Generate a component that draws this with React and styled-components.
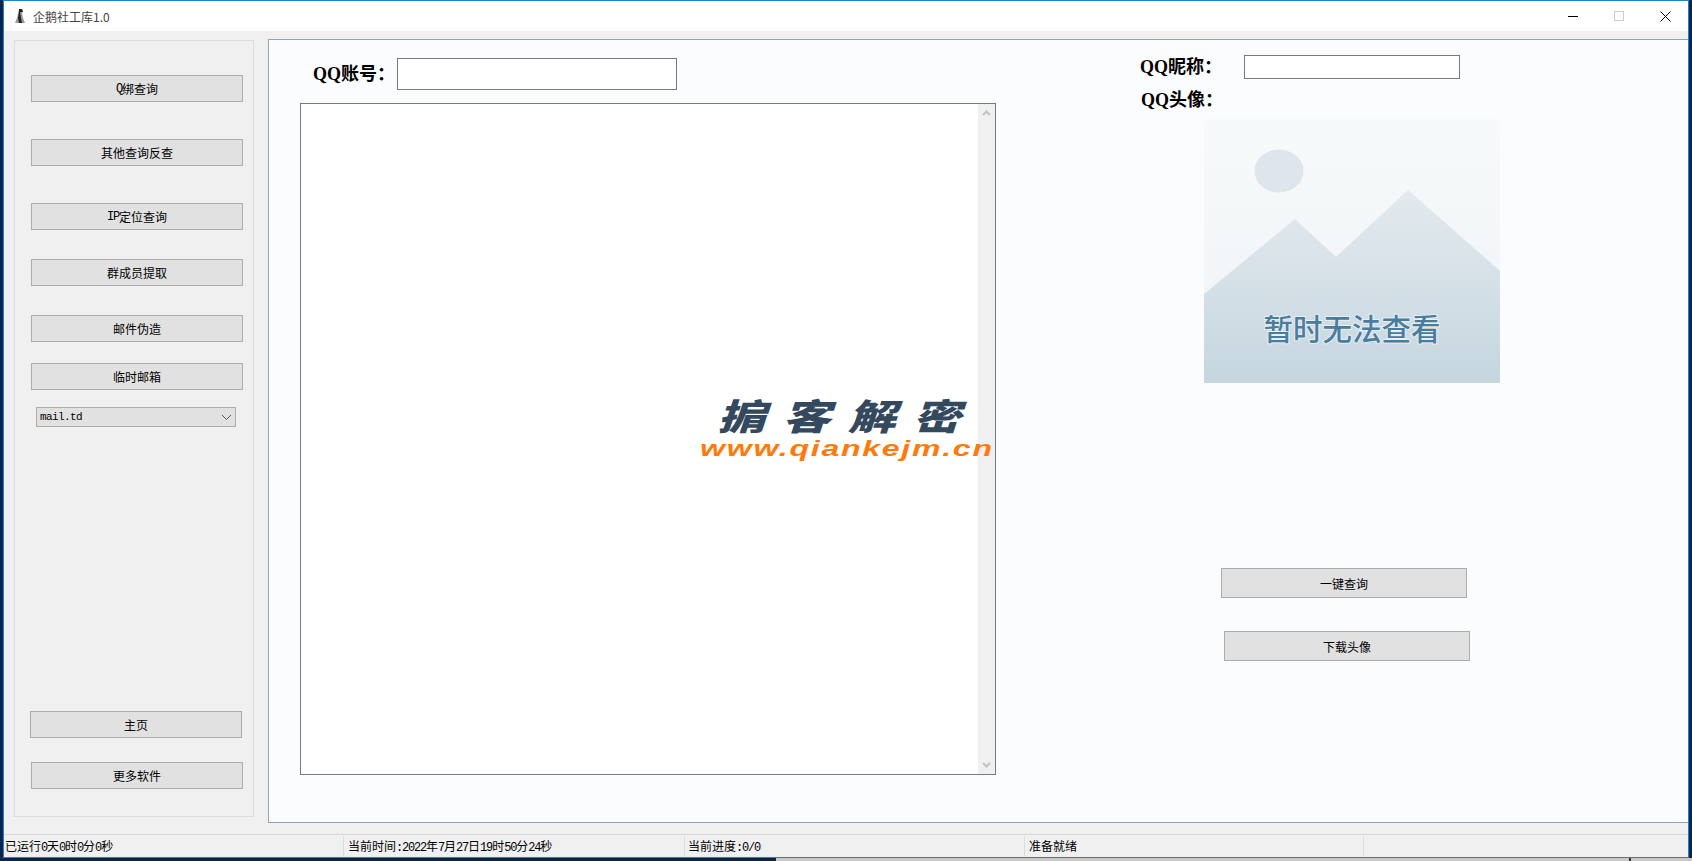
import styled, { createGlobalStyle } from 'styled-components';

const GlobalStyle = createGlobalStyle`
    html, body {
        margin: 0;
        padding: 0;
        height: 100%;
        overflow: hidden;
    }
    body {
        background: #03264a;
        font-family: "Noto Sans CJK SC", "Liberation Sans", sans-serif;
    }
`;

const SONG = `"Liberation Mono", "Noto Sans CJK SC", monospace`;
const LABEL = `"Liberation Serif", "Noto Sans CJK SC", serif`;

const Desktop = styled.div`
    width: 1692px;
    height: 861px;
    display: flex;
    align-items: flex-start;
    padding-left: 3px;
    box-sizing: border-box;
    background:
        linear-gradient(90deg, #03264a 0 776px, #c8c8c8 776px 1629px, #333 1629px 1631px, #c8c8c8 1631px) bottom / 100% 3px no-repeat,
        #03264a;
`;

const Window = styled.div`
    width: 1686px;
    height: 858px;
    box-sizing: border-box;
    border: 1px solid #1883d7;
    background: #f0f0f0;
    display: flex;
    flex-direction: column;
`;

const TitleBar = styled.div`
    height: 30px;
    flex: none;
    background: #fff;
    display: flex;
    align-items: center;
    padding-left: 10px;
`;

const TitleText = styled.span`
    margin-left: 7px;
    font-size: 12px;
    color: #444;
`;

const WinControls = styled.div`
    margin-left: auto;
    display: flex;
    height: 100%;
`;

const WinButton = styled.div`
    width: 46px;
    height: 100%;
    display: flex;
    align-items: center;
    justify-content: center;
`;

const Body = styled.div`
    flex: 1;
    min-height: 0;
    display: flex;
    align-items: flex-start;
    padding: 8px 0 0 10px;
`;

const Sidebar = styled.div`
    width: 240px;
    height: 777px;
    box-sizing: border-box;
    margin-top: 1px;
    border: 1px solid #dcdcdc;
    padding: 34px 0 27px 16px;
    display: flex;
    flex-direction: column;
    flex: none;
`;

const SideButton = styled.div`
    width: 212px;
    height: 27px;
    flex: none;
    box-sizing: border-box;
    margin-top: ${({ $top }) => $top || 0}px;
    margin-left: ${({ $shift }) => $shift || 0}px;
    background: #e1e1e1;
    border: 1px solid #adadad;
    display: flex;
    align-items: center;
    justify-content: center;
    font-family: ${SONG};
    font-size: 12px;
    color: #000;
`;

const Latin = styled.span`
    letter-spacing: -1.2px;
`;

const Select = styled.div`
    width: 200px;
    height: 20px;
    flex: none;
    box-sizing: border-box;
    margin: 17px 0 0 5px;
    padding: 0 3px;
    background: #e1e1e1;
    border: 1px solid #adadad;
    display: flex;
    align-items: center;
    justify-content: space-between;
    font-family: ${SONG};
    font-size: 11px;
    letter-spacing: -0.6px;
    color: #000;
`;

const BottomGroup = styled.div`
    margin-top: auto;
    display: flex;
    flex-direction: column;
`;

const MainPanel = styled.div`
    margin-left: 14px;
    width: 1420px;
    height: 784px;
    box-sizing: border-box;
    border: 1px solid #8ea5b5;
    border-right: none;
    background: #fbfcfe;
    display: flex;
    align-items: flex-start;
`;

const LeftColumn = styled.div`
    width: 728px;
    padding: 18px 0 0 31px;
    box-sizing: border-box;
    flex: none;
`;

const AccountRow = styled.div`
    display: flex;
    align-items: center;
    margin-left: 13px;
`;

const FieldLabel = styled.span`
    font-family: ${LABEL};
    font-size: 18px;
    font-weight: 700;
    line-height: 24px;
    color: #000;
    white-space: nowrap;
`;

const TextInput = styled.input`
    width: ${({ $w }) => $w}px;
    height: ${({ $h }) => $h}px;
    box-sizing: border-box;
    margin-left: ${({ $left }) => $left}px;
    padding: 0 4px;
    border: 1px solid #7a7a7a;
    border-radius: 0;
    background: #fff;
    outline: none;
`;

const ResultBox = styled.div`
    position: relative;
    width: 696px;
    height: 672px;
    margin-top: 13px;
    box-sizing: border-box;
    border: 1px solid #7a7a7a;
    background: #fff;
    display: flex;
    justify-content: flex-end;
`;

const ScrollTrack = styled.div`
    width: 17px;
    background: #f0f0f0;
    display: flex;
    flex-direction: column;
    justify-content: space-between;
    align-items: center;
    padding: 6px 0;
`;

const Watermark = styled.div`
    position: absolute;
    left: 400px;
    top: 289px;
    width: 296px;
    display: flex;
    flex-direction: column;
    align-items: center;
    pointer-events: none;
`;

const WatermarkTitle = styled.div`
    font-family: "Noto Sans CJK SC", sans-serif;
    font-size: 36px;
    font-weight: 900;
    line-height: 42px;
    letter-spacing: 13px;
    color: #35495e;
    transform: scaleX(1.33) skewX(-14deg);
    white-space: nowrap;
    margin-left: 8px;
`;

const WatermarkUrl = styled.div`
    font-family: "Liberation Sans", sans-serif;
    font-size: 22px;
    font-weight: 700;
    font-style: italic;
    line-height: 26px;
    letter-spacing: 1.2px;
    color: #ff7a0a;
    transform: scaleX(1.455);
    white-space: nowrap;
    margin: 1px 5px 0 0;
`;

const RightColumn = styled.div`
    flex: 1;
    padding-top: 15px;
    display: flex;
    flex-direction: column;
`;

const NickRow = styled.div`
    display: flex;
    align-items: center;
    margin-left: 143px;
`;

const AvatarLabel = styled(FieldLabel)`
    margin: 9px 0 0 144px;
`;

const Placeholder = styled.svg`
    display: block;
    margin: 7px 0 0 207px;
    flex: none;
`;

const ActionButton = styled.div`
    width: 246px;
    height: 30px;
    box-sizing: border-box;
    margin-top: ${({ $top }) => $top}px;
    margin-left: ${({ $left }) => $left}px;
    background: #e1e1e1;
    border: 1px solid #adadad;
    display: flex;
    align-items: center;
    justify-content: center;
    font-size: 12px;
    color: #000;
`;

const StatusBar = styled.div`
    height: 22px;
    flex: none;
    margin-top: auto;
    border-top: 1px solid #d7d7d7;
    display: flex;
`;

const StatusCell = styled.div`
    width: ${({ $w }) => $w}px;
    box-sizing: border-box;
    flex: ${({ $w }) => ($w ? 'none' : '1')};
    padding: 4px 0 0 ${({ $pad }) => $pad ?? 3}px;
    margin: 1px 0;
    border-right: ${({ $last }) => ($last ? 'none' : '1px solid #dcdcdc')};
    font-family: ${SONG};
    font-size: 12px;
    line-height: 16px;
    color: #000;
    white-space: nowrap;
`;

// digits and latin letters are half width in the status bar
function Mixed({ text }) {
    return text.split(/([\x20-\x7e]+)/).map((part, i) =>
        i % 2 ? <Latin key={i}>{part}</Latin> : part
    );
}

function PenguinIcon() {
    return (
        <svg width="12" height="16" viewBox="0 0 12 16">
            <path d="M5 1h3l1 3-1 1 1 5 2 5H1l2-5 1-5z" fill="#9a9a9a" />
            <path d="M5 1h3l1 3H6l1 6 1 5H5l-1-5 1-5z" fill="#222" />
        </svg>
    );
}

function NoImage() {
    return (
        <Placeholder width="296" height="264" viewBox="0 0 296 264">
            <defs>
                <linearGradient id="sky" x1="0" y1="0" x2="0" y2="1">
                    <stop offset="0" stopColor="#f7fafb" />
                    <stop offset="1" stopColor="#eef3f6" />
                </linearGradient>
                <linearGradient id="hill" x1="0" y1="0" x2="0" y2="1">
                    <stop offset="0" stopColor="#e4eaee" />
                    <stop offset="1" stopColor="#c5d6df" />
                </linearGradient>
            </defs>
            <rect width="296" height="264" fill="url(#sky)" />
            <ellipse cx="75" cy="52" rx="24.5" ry="21.5" fill="#dee5ec" />
            <path d="M0 175 91 100 132 138 204 71 296 152V264H0z" fill="url(#hill)" />
            <text
                x="148"
                y="221"
                textAnchor="middle"
                fontFamily="Noto Sans CJK SC, sans-serif"
                fontSize="29.5"
                fontWeight="500"
                fill="#4a7c9e"
                stroke="#e8f0f4"
                strokeWidth="2"
                paintOrder="stroke"
            >
                暂时无法查看
            </text>
        </Placeholder>
    );
}

function ChevronUp() {
    return (
        <svg width="9" height="6" viewBox="0 0 9 6">
            <path d="M1 5l3.5-3.5L8 5" fill="none" stroke="#c2c2c2" strokeWidth="2" />
        </svg>
    );
}

function ChevronDown() {
    return (
        <svg width="9" height="6" viewBox="0 0 9 6">
            <path d="M1 1l3.5 3.5L8 1" fill="none" stroke="#c2c2c2" strokeWidth="2" />
        </svg>
    );
}

export default function App() {
    return (
        <Desktop>
            <GlobalStyle />
            <Window>
                <TitleBar>
                    <PenguinIcon />
                    <TitleText>企鹅社工库1.0</TitleText>
                    <WinControls>
                        <WinButton>
                            <svg width="10" height="10" viewBox="0 0 10 10">
                                <path d="M0 5.5h10" stroke="#000" />
                            </svg>
                        </WinButton>
                        <WinButton>
                            <svg width="10" height="10" viewBox="0 0 10 10">
                                <rect x="0.5" y="0.5" width="9" height="9" fill="none" stroke="#ccc" />
                            </svg>
                        </WinButton>
                        <WinButton>
                            <svg width="11" height="11" viewBox="0 0 11 11">
                                <path d="M0.5 0.5l10 10M10.5 0.5l-10 10" stroke="#000" />
                            </svg>
                        </WinButton>
                    </WinControls>
                </TitleBar>
                <Body>
                    <Sidebar>
                        <SideButton><Latin>Q</Latin>绑查询</SideButton>
                        <SideButton $top={37}>其他查询反查</SideButton>
                        <SideButton $top={37}><Latin>IP</Latin>定位查询</SideButton>
                        <SideButton $top={29}>群成员提取</SideButton>
                        <SideButton $top={29}>邮件伪造</SideButton>
                        <SideButton $top={21}>临时邮箱</SideButton>
                        <Select>
                            mail.td
                            <svg width="11" height="7" viewBox="0 0 11 7">
                                <path d="M1 1l4.5 4.5L10 1" fill="none" stroke="#555" />
                            </svg>
                        </Select>
                        <BottomGroup>
                            <SideButton $shift={-1}>主页</SideButton>
                            <SideButton $top={24}>更多软件</SideButton>
                        </BottomGroup>
                    </Sidebar>
                    <MainPanel>
                        <LeftColumn>
                            <AccountRow>
                                <FieldLabel>QQ账号：</FieldLabel>
                                <TextInput $w={280} $h={32} $left={2} />
                            </AccountRow>
                            <ResultBox>
                                <ScrollTrack>
                                    <ChevronUp />
                                    <ChevronDown />
                                </ScrollTrack>
                                <Watermark>
                                    <WatermarkTitle>掮客解密</WatermarkTitle>
                                    <WatermarkUrl>www.qiankejm.cn</WatermarkUrl>
                                </Watermark>
                            </ResultBox>
                        </LeftColumn>
                        <RightColumn>
                            <NickRow>
                                <FieldLabel>QQ昵称：</FieldLabel>
                                <TextInput $w={216} $h={24} $left={22} />
                            </NickRow>
                            <AvatarLabel>QQ头像：</AvatarLabel>
                            <NoImage />
                            <ActionButton $top={185} $left={224}>一键查询</ActionButton>
                            <ActionButton $top={33} $left={227}>下载头像</ActionButton>
                        </RightColumn>
                    </MainPanel>
                </Body>
                <StatusBar>
                    <StatusCell $w={340} $pad={1}><Mixed text="已运行0天0时0分0秒" /></StatusCell>
                    <StatusCell $w={341} $pad={4}><Mixed text="当前时间:2022年7月27日19时50分24秒" /></StatusCell>
                    <StatusCell $w={340}><Mixed text="当前进度:0/0" /></StatusCell>
                    <StatusCell $w={339} $pad={4}><Mixed text="准备就绪" /></StatusCell>
                    <StatusCell $last />
                </StatusBar>
            </Window>
        </Desktop>
    );
}
